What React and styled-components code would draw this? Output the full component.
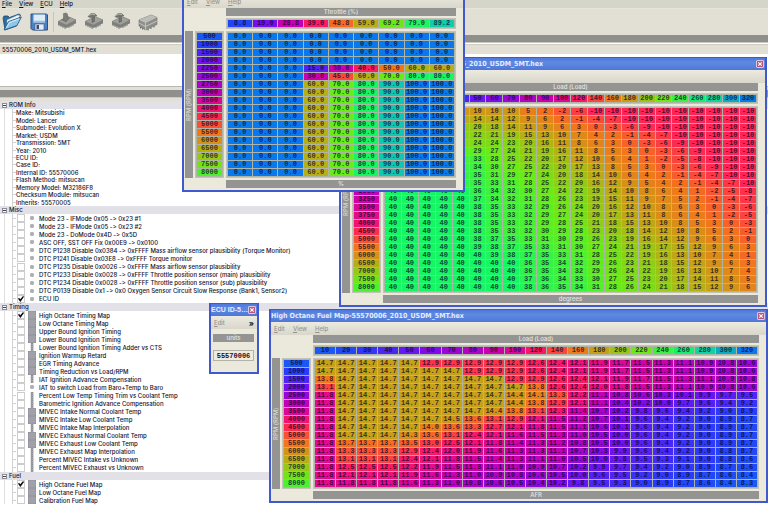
import React from "react";
import styled, { createGlobalStyle } from "styled-components";

const GlobalStyle = createGlobalStyle`
  *, *::before, *::after { box-sizing: border-box; }
  body {
    margin: 0;
    overflow: hidden;
    color: #12122c;
    background: #fff;
    font-family: Inter, "DejaVu Sans", sans-serif;
    font-variant-ligatures: none;
    font-size: 6px;
    font-weight: 500;
    line-height: 8px;
  }
  button, input { font: inherit; color: inherit; margin: 0; padding: 0; }
`;

/* ---------- colour scale ---------- */

const STOPS = [
  [8, 120, 236], [40, 60, 250], [124, 10, 236], [206, 0, 172], [255, 28, 92], [244, 116, 28],
  [182, 176, 20], [104, 236, 24], [22, 246, 100], [16, 200, 176], [8, 120, 236],
];

const heat = (t) => {
  const p = Math.min(Math.max(t, 0), 1) * 10;
  const i = Math.min(Math.floor(p), 9);
  const mix = STOPS[i].map((c, k) => Math.round(c + (STOPS[i + 1][k] - c) * (p - i)));
  return `rgb(${mix.join(",")})`;
};

const rpmScale = (v) => heat(0.01 + v / 11100);
const loadScale = (v) => heat(0.02 + v / 327);

/* ---------- data ---------- */

const times = (n, v) => Array(n).fill(v);
const nums = (s) => s.split(" ");

const zeros = times(9, "0.0");
const throttle = {
  title: "Throttle Map-55570006_2010_USDM_5MT.hex",
  xLabel: "Throttle (%)",
  unit: "%",
  xScale: (v) => heat(v / 100),
  scale: (v) => heat(v / 100),
  x: nums("8.8 19.0 28.8 39.0 48.8 59.0 69.2 79.0 89.2"),
  y: nums("500 1000 1500 2000 2250 2500 2750 3000 3500 4000 4500 5000 5500 6000 6500 7000 7500 8000"),
  rows: [
    ...times(4, zeros),
    nums("0.0 0.0 0.0 15.0 30.0 40.0 50.0 60.0 60.0"),
    nums("0.0 0.0 0.0 30.0 45.0 60.0 70.0 80.0 80.0"),
    ...times(12, nums("0.0 0.0 0.0 60.0 70.0 80.0 90.0 100.0 100.0")),
  ],
};

const timing = {
  title: "High Octane Timing Map-55570006_2010_USDM_5MT.hex",
  xLabel: "Load (Load)",
  unit: "degrees",
  xScale: loadScale,
  scale: (v) => heat(0.48 + v * 0.008 - (v < 0 ? v * 0.001 : 0)),
  x: nums("5 10 20 30 40 50 60 70 80 90 100 120 140 160 180 200 220 240 260 280 300 320"),
  y: nums("500 750 1000 1250 1500 1750 2000 2250 2500 2750 3000 3250 3500 3750 4000 4500 5000 5500 6000 6500 7000 7500 8000"),
  rows: [
    "10 10 10 5 2 -2 -6 -10 -10 -10 -10 -10 -10 -10 -10 -10 -10",
    "14 14 12 9 6 2 -1 -4 -7 -10 -10 -10 -10 -10 -10 -10 -10",
    "20 18 14 11 9 6 3 0 -3 -6 -9 -10 -10 -10 -10 -10 -10",
    "22 21 19 15 13 10 7 4 2 -1 -4 -7 -10 -10 -10 -10 -10",
    "24 24 23 20 16 11 8 6 3 0 -3 -6 -9 -10 -10 -10 -10",
    "29 27 24 21 19 16 11 8 5 3 0 -3 -6 -9 -10 -10 -10",
    "33 28 25 22 20 17 12 10 6 4 1 -2 -5 -8 -10 -10 -10",
    "34 30 27 25 22 20 17 13 8 5 3 0 -3 -6 -9 -10 -10",
    "35 31 29 27 24 20 18 14 10 6 4 2 -1 -4 -7 -10 -10",
    "35 33 31 28 25 22 20 16 12 9 5 4 2 -1 -4 -7 -10",
    "36 34 32 30 27 24 22 19 14 10 8 6 4 1 -2 -5 -8",
    "37 34 32 31 28 26 23 19 15 11 9 7 5 2 -1 -4 -7",
    "38 35 33 32 29 26 24 20 16 12 10 8 6 3 0 -3 -6",
    "38 35 33 32 29 27 24 20 17 13 11 8 6 4 1 -2 -5",
    "38 35 33 32 29 28 25 21 18 15 13 10 8 5 3 0 -3",
    "38 35 33 32 30 29 28 23 20 18 14 12 10 8 5 2 -1",
    "38 37 35 33 31 30 29 26 23 19 16 14 12 9 6 3 0",
    "39 38 37 35 33 31 30 27 24 21 19 17 15 12 9 6 3",
    "40 39 38 37 35 33 31 28 25 22 19 16 13 10 7 4 1",
    "40 40 40 36 35 34 32 29 26 23 21 18 15 12 9 6 3",
    "40 40 40 36 35 34 32 29 26 24 22 19 16 13 10 7 4",
    "40 40 40 37 36 34 33 30 27 25 23 20 17 14 11 8 5",
    "40 40 40 38 36 35 34 31 28 26 24 21 18 15 12 9 6",
  ].map((s, i) => {
    const r = nums(s);
    return [...times(5, i < 10 ? r[0] : "40"), ...r];
  }),
};

const fuel = {
  title: "High Octane Fuel Map-55570006_2010_USDM_5MT.hex",
  xLabel: "Load (Load)",
  unit: "AFR",
  xScale: loadScale,
  scale: (v) => heat((v - 7.7) / 12.2),
  x: nums("10 20 30 40 50 60 70 80 90 100 120 140 160 180 200 220 240 260 280 300 320"),
  y: nums("500 1000 1500 2000 2500 3000 3500 4000 4500 5000 5500 6000 6500 7000 7500 8000"),
  rows: [
    "14.7 14.7 14.7 14.7 14.7 12.9 12.9 12.9 12.9 12.9 12.6 12.4 12.1 11.9 11.7 11.5 11.3 11.1 10.9 10.8 10.6",
    "14.7 14.7 14.7 14.7 14.7 14.7 14.7 12.9 12.9 12.9 12.6 12.4 12.1 11.9 11.7 11.5 11.3 11.1 10.9 10.8 10.6",
    "13.8 14.7 14.7 14.7 14.7 14.7 14.7 14.7 14.7 12.9 12.9 12.6 12.4 12.1 11.9 11.7 11.5 11.3 11.1 10.9 10.8",
    "13.1 14.7 14.7 14.7 14.7 14.7 14.7 14.7 14.7 14.7 13.8 12.6 12.4 12.0 11.8 11.5 11.3 11.1 10.9 10.8 10.6",
    "11.8 14.7 14.7 14.7 14.7 14.7 14.7 14.7 14.7 14.4 14.1 13.3 12.2 11.1 10.8 10.6 10.3 10.1 9.9 9.7 9.5",
    "11.8 14.7 14.7 14.7 14.7 14.7 14.7 14.7 14.7 14.4 13.8 12.9 12.1 11.1 10.4 10.2 10.0 9.7 9.6 9.4 9.2",
    "11.8 14.7 14.7 14.7 14.7 14.7 14.7 14.7 14.4 13.8 13.1 12.3 11.4 10.7 10.2 9.8 9.6 9.4 9.2 9.0 8.9",
    "11.8 14.7 14.7 14.7 14.7 14.7 14.5 13.6 13.1 12.9 12.1 11.5 11.2 10.7 10.1 9.6 9.4 9.2 9.0 8.9 8.7",
    "11.8 14.7 14.7 14.7 14.7 14.0 13.6 13.3 12.7 12.1 11.8 11.5 11.1 10.6 10.1 9.6 9.4 9.2 9.0 8.9 8.7",
    "11.8 14.7 14.7 14.7 14.3 13.6 13.1 12.4 12.1 11.6 11.5 11.3 11.0 10.5 10.0 9.6 9.4 9.2 9.0 8.9 8.7",
    "11.8 13.7 13.7 13.7 13.5 13.0 12.5 12.1 11.8 11.4 11.3 11.2 10.8 10.5 10.0 9.6 9.4 9.2 9.0 8.9 8.7",
    "11.8 13.3 13.3 13.3 12.9 12.4 12.0 11.9 11.6 11.3 11.3 11.1 10.7 10.3 9.9 9.6 9.4 9.2 9.0 8.8 8.7",
    "11.8 13.1 13.1 13.1 12.4 12.1 11.8 11.5 11.4 11.3 11.1 11.0 10.5 10.0 9.8 9.5 9.3 9.1 9.0 8.8 8.6",
    "11.8 12.5 12.5 12.5 12.2 11.9 11.5 11.3 11.1 11.0 10.9 10.7 10.2 9.9 9.7 9.4 9.2 9.0 8.9 8.7 8.6",
    "11.8 12.1 12.1 12.1 11.9 11.6 11.3 11.0 10.9 10.8 10.6 10.5 10.0 9.6 9.5 9.2 9.0 8.9 8.7 8.6 8.4",
    "11.8 11.8 11.8 11.8 11.6 11.3 11.0 10.8 10.6 10.5 10.4 10.2 9.8 9.5 9.3 9.0 8.9 8.7 8.6 8.4 8.3",
  ].map(nums),
};

const romInfo = [
  "Make: Mitsubishi", "Model: Lancer", "Submodel: Evolution X", "Market: USDM", "Transmission: 5MT",
  "Year: 2010", "ECU ID:", "Case ID:", "Internal ID: 55570006", "Flash Method: mitsucan",
  "Memory Model: M32186F8", "Checksum Module: mitsucan", "Inherits: 55570005",
];

const groups = [
  {
    name: "Misc",
    height: 89,
    items: [
      ["dot", "Mode 23 - IFMode 0x05 -> 0x23 #1"],
      ["dot", "Mode 23 - IFMode 0x05 -> 0x23 #2"],
      ["dot", "Mode 23 - DoMode 0x4D -> 0x5D"],
      ["dot", "ASC OFF, SST OFF Fix 0x00E9 -> 0x0100"],
      ["dot", "DTC P1238 Disable 0x0384 -> 0xFFFF Mass airflow sensor plausibility (Torque Monitor)"],
      ["dot", "DTC P1241 Disable 0x03E8 -> 0xFFFF Torque monitor"],
      ["dot", "DTC P1235 Disable 0x0026 -> 0xFFFF Mass airflow sensor plausibility"],
      ["dot", "DTC P1233 Disable 0x0028 -> 0xFFFF Throttle position sensor (main) plausibility"],
      ["dot", "DTC P1234 Disable 0x0028 -> 0xFFFF Throttle position sensor (sub) plausibility"],
      ["dot", "DTC P0139 Disable 0x1 -> 0x0 Oxygen Sensor Circuit Slow Response (Bank1, Sensor2)"],
      ["dot", "ECU ID", true],
    ],
  },
  {
    name: "Timing",
    height: 161,
    items: [
      ["grid", "High Octane Timing Map", true],
      ["grid", "Low Octane Timing Map"],
      ["grid", "Upper Bound Ignition Timing"],
      ["grid", "Lower Bound Ignition Timing"],
      ["bar", "Lower Bound Ignition Timing Adder vs CTS"],
      ["grid", "Ignition Warmup Retard"],
      ["grid", "EGR Timing Advance"],
      ["grid", "Timing Reduction vs Load/RPM"],
      ["bar", "IAT Ignition Advance Compensation"],
      ["dot", "IAT to switch Load from Baro+Temp to Baro"],
      ["bar", "Percent Low Temp Timing Trim vs Coolant Temp"],
      ["bar", "Barometric Ignition Advance Compensation"],
      ["grid", "MIVEC Intake Normal Coolant Temp"],
      ["grid", "MIVEC Intake Low Coolant Temp"],
      ["bar", "MIVEC Intake Map Interpolation"],
      ["grid", "MIVEC Exhaust Normal Coolant Temp"],
      ["grid", "MIVEC Exhaust Low Coolant Temp"],
      ["bar", "MIVEC Exhaust Map Interpolation"],
      ["bar", "Percent MIVEC Intake vs Unknown"],
      ["bar", "Percent MIVEC Exhaust vs Unknown"],
    ],
  },
  {
    name: "Fuel",
    height: 24,
    items: [
      ["grid", "High Octane Fuel Map", true],
      ["grid", "Low Octane Fuel Map"],
      ["grid", "Calibration Fuel Map"],
    ],
  },
];

/* ---------- main window ---------- */

const Desktop = styled.div`
  position: relative;
  height: 100vh;
  overflow: hidden;
`;

const Main = styled.main`
  display: flex;
  flex-direction: column;
  min-height: 100%;
`;

const MenuBar = styled.nav`
  display: flex;
  gap: 7px;
  height: 9px;
  padding-left: 2px;
  background: #d6d5ca;
  border-bottom: 1px solid #e6e5dc;
`;

const MenuButton = styled.button`
  border: 0;
  background: none;
  line-height: 8px;
  &::first-letter { text-decoration: underline; }
`;

const Toolbar = styled.div`
  display: flex;
  align-items: center;
  height: 26px;
  background: #e2e0d4;
`;

const ToolGroup = styled.div`
  display: flex;
  gap: 7px;
  padding: 0 4px 0 2px;
  & + & { padding-left: 3px; border-left: 1px solid #c8c6bb; }
`;

const ToolButton = styled.button`
  display: flex;
  border: 0;
  background: none;
`;

const Splitter = styled.div`
  height: 8px;
  background: #8f8f8c;
  border-bottom: 1px solid #c9c8c0;
`;

const FileBar = styled.div`
  margin-top: 1px;
  padding: 1px 2px 0;
  background: #e2e0d4;
  border-top: 1px solid #cfcec4;
`;

const FileList = styled.div`
  height: 33px;
  background: #fff;
  border-bottom: 1px solid #b9b8b0;
`;

const Gap = styled.div`
  height: 3px;
  background: #e2e0d4;
`;

const Tree = styled.div`
  flex: 1;
  background: #fff;
`;

const GroupHead = styled.h2`
  display: flex;
  align-items: center;
  gap: 2px;
  height: 8px;
  margin: 0;
  padding-left: 2px;
  font-size: 6px;
  font-weight: 500;
  line-height: 8px;
  background: #e1e1e7;
`;

const Toggle = styled.button`
  display: flex;
  width: 5px;
  height: 5px;
  align-items: center;
  border: 1px solid #8b8b95;
  background: #fff;
  &::before { content: ""; flex: 1; height: 1px; background: #444; }
`;

const Items = styled.ul`
  display: grid;
  grid-auto-rows: 1fr;
  min-height: ${(p) => p.$height}px;
  margin: 0 0 0 4px;
  padding: 0 0 0 7px;
  line-height: 7px;
  list-style: none;
  border-left: 1px solid #dedede;
`;

const Item = styled.li`
  display: flex;
  align-items: center;
  white-space: nowrap;
  border-left: 1px solid #d2d2d2;
  &::before { content: ""; width: 3px; height: 1px; background: #d2d2d2; }
`;

const Check = styled.input`
  appearance: none;
  display: grid;
  width: 8px;
  height: 8px;
  margin: 0 3px 0 1px;
  border: 1px solid #cdcdcd;
  background: #fff;
  &:checked::before {
    content: "";
    background: #0c0c14;
    clip-path: polygon(0 45%, 18% 30%, 38% 55%, 84% 0, 100% 15%, 40% 100%);
  }
`;

const ItemLabel = styled.label`
  display: flex;
  align-items: center;
  gap: 3px;
`;

const KindSvg = styled.svg`
  width: 8px;
  height: 8px;
  flex: none;
`;

function KindIcon({ kind }) {
  if (kind === "dot")
    return <KindSvg viewBox="0 0 8 8"><rect x="2.8" y="2.8" width="2.4" height="2.4" fill="#c6c6cc" stroke="#85858f" strokeWidth=".8" /></KindSvg>;
  if (kind === "bar")
    return (
      <KindSvg viewBox="0 0 8 8">
        <rect x="2.8" width="2.6" height="8" fill="#8e8e96" />
        <path d="M3.6 1.5h1M3.6 3.5h1M3.6 5.5h1M3.6 7.3h1" stroke="#c2c2c8" strokeWidth=".8" />
      </KindSvg>
    );
  return (
    <KindSvg viewBox="0 0 8 8">
      <rect width="8" height="8" fill="#8e8e96" />
      <path d="M0 2h8M0 4h8M0 6h8M2 0v8M4 0v8M6 0v8" stroke="#b9b9c0" strokeWidth=".5" />
    </KindSvg>
  );
}

/* ---------- toolbar icons ---------- */

const IconSvg = styled.svg`
  width: 20px;
  height: 20px;
`;

function FolderIcon() {
  return (
    <IconSvg viewBox="0 0 20 20">
      <path d="M1 6 2 4h4l1.5 1.5L17 2l1.5 1-4 11L3 18Z" fill="#2f6c9c" stroke="#1d4a72" strokeWidth=".8" />
      <path d="m5 8 11-5 2 .8-6 9L5 16Z" fill="#f4fbff" stroke="#7fa9c4" strokeWidth=".5" />
      <path d="m2 18 4.5-8.5L19.4 5 15 13.5Z" fill="#8fc6e8" stroke="#28618e" strokeWidth=".9" />
      <path d="m4.5 15.5 3-5L17 7" fill="none" stroke="#d8f0fc" strokeWidth="1" />
    </IconSvg>
  );
}

function FloppyIcon() {
  return (
    <IconSvg viewBox="0 0 20 20">
      <path d="M2 2h15.5l1 1v15H3.5L2 16.5Z" fill="#4c83c4" stroke="#27538c" strokeWidth="1" />
      <rect x="4.5" y="2.5" width="11.5" height="8" fill="#dcecf8" />
      <path d="M4.5 9.5h11.5" stroke="#9cc0e0" strokeWidth="1.5" />
      <rect x="6" y="12" width="9" height="6" fill="#e7ebef" stroke="#38567c" strokeWidth=".6" />
      <rect x="7.5" y="13" width="2.5" height="4" fill="#33507a" />
    </IconSvg>
  );
}

function ChipIcon({ mark }) {
  return (
    <IconSvg viewBox="0 0 20 20">
      <path d="M2 12v2M4 13v2M6 14v2M8 15v2M12 16v-2M14 15v-2M16 14v-2M18 12v-2" stroke="#7b7b78" strokeWidth="1" />
      <path d="m1 9.5 10-5 8 3.5v3l-9.5 5L1 12.5Z" fill="#7e7e7b" />
      <path d="m1 9.5 10-5 8 3.5-9.5 5Z" fill="#a0a09c" stroke="#7a7a77" strokeWidth=".5" />
      {mark === "down" && <path d="m6.5 1.5 2.500-.5L10.500 2v4l2-.2L9 10 4.500 7.500l2-.3Z" fill="#7d7d78" stroke="#5f5f5c" strokeWidth=".5" />}
      {mark === "up" && <path d="M4 4.500 7 1.500l4 .3 2 2.200-2.500-.2v5.700L8 10.500V5L6 5.500Z" fill="#74746f" stroke="#595956" strokeWidth=".5" />}
      {mark === "up" && <path d="m5.500 3.500 2-1.300 3.500.5" fill="none" stroke="#d4d4cf" strokeWidth=".7" />}
    </IconSvg>
  );
}

function BoxIcon() {
  return (
    <IconSvg viewBox="0 0 20 20">
      <path d="m1 8 12-5 6 2.500v7L7.500 18 1 14Z" fill="#8e8e8a" stroke="#6d6d6a" strokeWidth=".6" />
      <path d="m1 8 12-5 6 2.500L7.500 11Z" fill="#bdbdb8" />
      <path d="M1 11l6.500 3.500L19 9M7.500 11v7" fill="none" stroke="#cfcfca" strokeWidth=".8" />
      <path d="M2.500 15v1.500M4.500 16v1.500M10 17v1.500M13 15.500V17M16 14v1.500" stroke="#686865" strokeWidth="1" />
    </IconSvg>
  );
}

/* ---------- floating windows ---------- */

const Floating = styled.section`
  position: absolute;
  left: ${(p) => p.$x}px;
  top: ${(p) => p.$y}px;
  width: ${(p) => p.$w}px;
  border: 2px solid #4059cf;
  border-top-width: 1px;
  background: #ebe8dc;
`;

const TitleBar = styled.header`
  display: flex;
  align-items: center;
  justify-content: space-between;
  height: 12px;
  padding-right: 1px;
  background: linear-gradient(#4f79dc, #5f8ae2 40%, #4f76d6);
  color: #e6ecfa;
`;

const Title = styled.h1`
  margin: 0;
  overflow: hidden;
  font-family: ${(p) => (p.$compact ? '"Liberation Sans"' : '"DejaVu Sans Condensed", "DejaVu Sans"')}, sans-serif;
  font-stretch: ${(p) => (p.$compact ? "normal" : "condensed")};
  font-size: 7px;
  font-weight: bold;
  line-height: 10px;
  white-space: nowrap;
  text-overflow: ellipsis;
`;

const Close = styled.button`
  display: flex;
  flex: none;
  width: 8px;
  height: 8px;
  border: 1px solid #dcc6dc;
  border-radius: 1px;
  background: #b8567c;
`;

const WindowMenu = styled.nav`
  display: flex;
  align-items: center;
  justify-content: space-between;
  height: 13px;
  padding: 0 3px;
  background: linear-gradient(#eceadf, #d9d7cb);
  color: #96958d;
`;

const MenuGroup = styled.div`
  display: flex;
  gap: 8px;
`;

const Chevrons = styled.button`
  border: 0;
  background: none;
  color: #222;
  font-size: 8px;
  font-weight: bold;
  line-height: 8px;
`;

const MapGrid = styled.div`
  display: grid;
  grid-template-columns: 8px 29px 1fr;
  gap: 2px;
  padding: 0 7px 2px 1px;
`;

const AxisBar = styled.div`
  grid-column: 3;
  height: 8px;
  background: #949492;
  color: #e6e6e2;
  text-align: center;
`;

const SideBar = styled.div`
  background: #949492;
  color: #d6d6d2;
  text-align: center;
  writing-mode: vertical-rl;
  transform: rotate(180deg);
`;

const Cells = styled.table`
  grid-column: ${(p) => p.$col};
  width: 100%;
  table-layout: fixed;
  border: 1px solid #c4c2b8;
  border-spacing: 1px;
  background: #aeb4a8;
  font-family: "Liberation Mono", monospace;
  font-size: 7px;
  font-weight: bold;
  line-height: 7px;
  text-align: center;
  color: rgba(10, 10, 40, 0.78);
  td, th { height: 7px; padding: 0; font-weight: bold; white-space: nowrap; }
`;

const ValueCell = styled.td`
  background: ${(p) => p.$fill};
`;

const AxisCell = styled.th`
  background: ${(p) => p.$fill};
`;

const UnitBody = styled.div`
  display: flex;
  flex-direction: column;
  gap: 8px;
  padding: 5px 3px 11px 2px;
`;

const UnitBar = styled.div`
  background: #949492;
  color: #e6e6e2;
  text-align: center;
`;

const UnitField = styled.input`
  width: 100%;
  height: 11px;
  border: 1px solid #b4b2a8;
  background: #eeecdf;
  text-align: center;
  font-family: "Liberation Mono", monospace;
  font-weight: bold;
  font-size: 7px;
`;

function CloseButton() {
  return (
    <Close aria-label="Close">
      <svg viewBox="0 0 6 6" width="6" height="6">
        <path d="m1.3 1.3 3.4 3.4M4.7 1.3 1.3 4.7" stroke="#fff" strokeWidth="1.2" />
      </svg>
    </Close>
  );
}

function MapWindow({ x, y, w, map }) {
  return (
    <Floating $x={x} $y={y} $w={w}>
      <TitleBar><Title>{map.title}</Title><CloseButton /></TitleBar>
      <WindowMenu>
        <MenuGroup>
          {["Edit", "View", "Help"].map((m) => <MenuButton key={m}>{m}</MenuButton>)}
        </MenuGroup>
      </WindowMenu>
      <MapGrid>
        <AxisBar>{map.xLabel}</AxisBar>
        <Cells $col={3}>
          <tbody>
            <tr>{map.x.map((v) => <AxisCell scope="col" key={v} $fill={map.xScale(+v)}>{v}</AxisCell>)}</tr>
          </tbody>
        </Cells>
        <SideBar>RPM (RPM)</SideBar>
        <Cells $col={2}>
          <tbody>
            {map.y.map((v) => <tr key={v}><AxisCell scope="row" $fill={rpmScale(+v)}>{v}</AxisCell></tr>)}
          </tbody>
        </Cells>
        <Cells $col={3}>
          <tbody>
            {map.rows.map((row, i) => (
              <tr key={i}>{row.map((v, j) => <ValueCell key={j} $fill={map.scale(+v)}>{v}</ValueCell>)}</tr>
            ))}
          </tbody>
        </Cells>
        <AxisBar>{map.unit}</AxisBar>
      </MapGrid>
    </Floating>
  );
}

function ParameterGroup({ group }) {
  return (
    <section>
      <GroupHead><Toggle aria-label={`Collapse ${group.name}`} />{group.name}</GroupHead>
      <Items $height={group.height}>
        {group.items.map(([kind, name, on], i) => {
          const id = `${group.name}-${i}`;
          return (
            <Item key={id}>
              <Check type="checkbox" id={id} defaultChecked={on} />
              <ItemLabel htmlFor={id}><KindIcon kind={kind} />{name}</ItemLabel>
            </Item>
          );
        })}
      </Items>
    </section>
  );
}

export default function App() {
  return (
    <Desktop>
      <GlobalStyle />
      <Main>
        <MenuBar>
          {["File", "View", "ECU", "Help"].map((m) => <MenuButton key={m}>{m}</MenuButton>)}
        </MenuBar>
        <Toolbar>
          <ToolGroup>
            <ToolButton aria-label="Open"><FolderIcon /></ToolButton>
            <ToolButton aria-label="Save"><FloppyIcon /></ToolButton>
          </ToolGroup>
          <ToolGroup>
            <ToolButton aria-label="Write"><ChipIcon mark="down" /></ToolButton>
            <ToolButton aria-label="Read"><ChipIcon mark="up" /></ToolButton>
            <ToolButton aria-label="Test"><ChipIcon mark="up" /></ToolButton>
            <ToolButton aria-label="Compare"><BoxIcon /></ToolButton>
          </ToolGroup>
        </Toolbar>
        <Splitter />
        <FileBar>55570006_2010_USDM_5MT.hex</FileBar>
        <FileList />
        <Gap />
        <Splitter />
        <Gap />
        <Tree>
          <section>
            <GroupHead><Toggle aria-label="Collapse ROM Info" />ROM Info</GroupHead>
            <Items $height={97}>
              {romInfo.map((t) => <Item key={t}>{t}</Item>)}
            </Items>
          </section>
          {groups.map((g) => <ParameterGroup key={g.name} group={g} />)}
        </Tree>
      </Main>
      <MapWindow x={339} y={57} w={428} map={timing} />
      <MapWindow x={182} y={-18} w={283} map={throttle} />
      <MapWindow x={269} y={309} w={499} map={fuel} />
      <Floating $x={209} $y={303} $w={50}>
        <TitleBar><Title $compact>ECU ID-55570006_2010_USDM_5MT.hex</Title><CloseButton /></TitleBar>
        <WindowMenu><MenuButton>Edit</MenuButton><Chevrons aria-label="More">»</Chevrons></WindowMenu>
        <UnitBody>
          <UnitBar>units</UnitBar>
          <UnitField aria-label="ECU ID" defaultValue="55570006" />
        </UnitBody>
      </Floating>
    </Desktop>
  );
}
